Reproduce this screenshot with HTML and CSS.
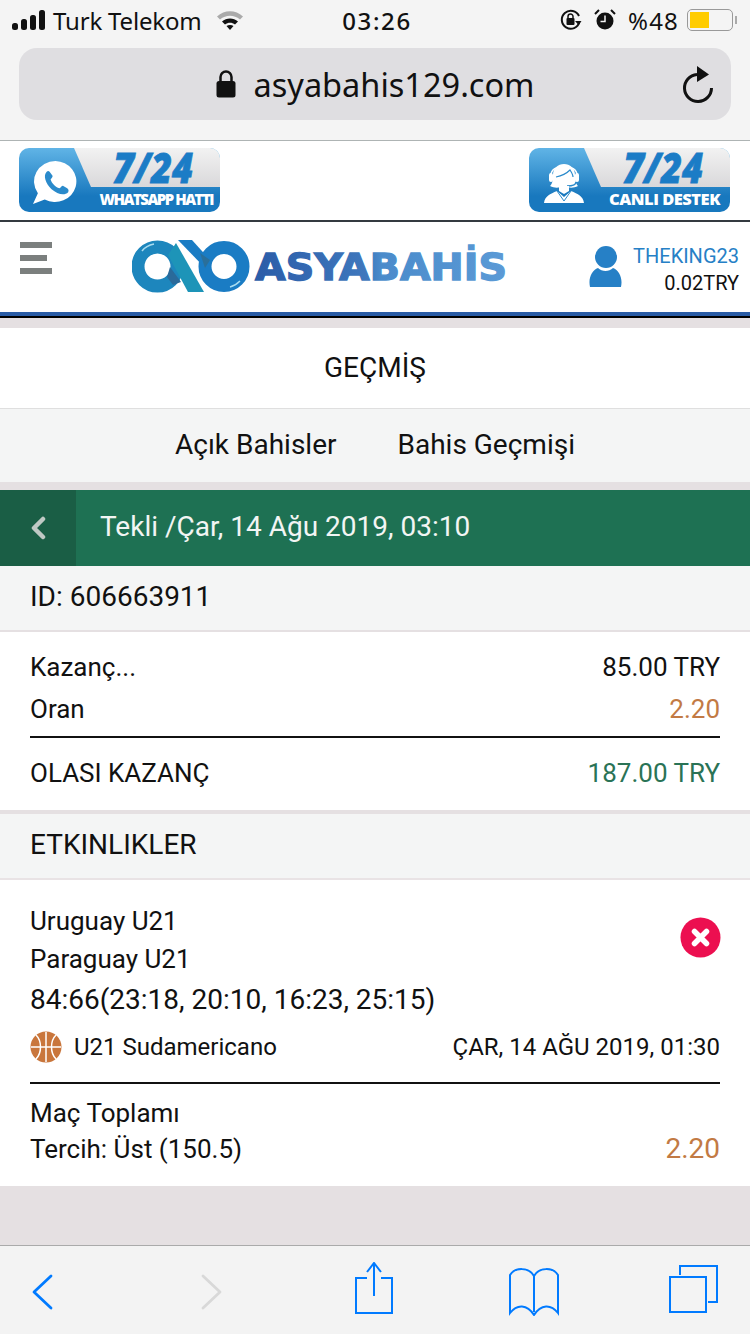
FILE: index.html
```html
<!DOCTYPE html>
<html lang="tr">
<head>
    <meta charset="UTF-8">
    <meta name="viewport" content="width=device-width, initial-scale=1.0">
    <title>Asyabahis - Geçmiş</title>
    <link rel="stylesheet" href="styles.css">
</head>
<body>
    <div class="phone">
        <div class="browser-top">
            <div class="status-bar">
                <div class="status-left">
                    <svg class="signal" width="36" height="20" viewBox="0 0 36 20">
                        <rect x="0" y="13" width="6" height="7" rx="2.5" fill="#111"/>
                        <rect x="9" y="9" width="6" height="11" rx="2.5" fill="#111"/>
                        <rect x="18" y="5" width="6" height="15" rx="2.5" fill="#111"/>
                        <rect x="27" y="0" width="6" height="20" rx="2.5" fill="#111"/>
                    </svg>
                    <span class="carrier">Turk Telekom</span>
                    <svg class="wifi" width="28" height="20" viewBox="0 0 28 20">
                        <path d="M1 6.500C8.500 -.500 19.500 -.500 27 6.500L24 9.500C18 4.500 10 4.500 4 9.500Z" fill="#aaa"/>
                        <path d="M6 11.500C10.500 7.500 17.500 7.500 22 11.500L19 14.500C16 12 12 12 9 14.500Z" fill="#111"/>
                        <path d="M10.500 16C12.500 14.500 15.500 14.500 17.500 16L14 20Z" fill="#111"/>
                    </svg>
                </div>
                <div class="clock">03:26</div>
                <div class="status-right">
                    <svg width="22" height="24" viewBox="0 0 22 24">
                        <path d="M19.500 14A9 9 0 1 1 19 8" fill="none" stroke="#111" stroke-width="2"/>
                        <path d="M15 13L21.500 13L18.500 17Z" fill="#111"/>
                        <rect x="6.500" y="10" width="8" height="7" rx="1" fill="#111"/>
                        <path d="M8 10V8.500a2.500 2.500 0 0 1 5 0V10" fill="none" stroke="#111" stroke-width="1.500"/>
                    </svg>
                    <svg class="alarm" width="22" height="24" viewBox="0 0 22 24">
                        <circle cx="11" cy="13" r="8.500" fill="#111"/>
                        <path d="M11 7.500V13.500H6.500" fill="none" stroke="#f4f4f4" stroke-width="1.500"/>
                        <path d="M1 6L5 2M21 6L17 2" stroke="#111" stroke-width="2"/>
                    </svg>
                    <span class="battery-text">%48</span>
                    <div class="battery"><div class="battery-fill"></div></div>
                    <div class="battery-cap"></div>
                </div>
            </div>
            <div class="url-bar">
                <div class="url">
                    <svg class="lock" width="20" height="28" viewBox="0 0 20 28">
                        <path d="M4.500 13V7a5.500 5.500 0 0 1 11 0V13" fill="none" stroke="#111" stroke-width="2.500"/>
                        <rect x="0.500" y="11" width="19" height="16.500" rx="2.500" fill="#111"/>
                    </svg>
                    <span>asyabahis129.com</span>
                </div>
                <svg class="reload" width="32" height="38" viewBox="0 0 32 38">
                    <path d="M15 8.500A13.500 13.500 0 1 0 29.500 22" fill="none" stroke="#111" stroke-width="3"/>
                    <path d="M15 0L27 8.500L15 16Z" fill="#111"/>
                </svg>
            </div>
        </div>

        <div class="promo-row">
            <div class="promo">
                <div class="promo-icon">
                    <svg width="45" height="43" viewBox="0 0 46 44">
                        <path d="M24 0A22 21 0 1 1 13 39.500L1 44L6 33A22 21 0 0 1 24 0Z" fill="#fff"/>
                        <path d="M15 11C11 15 14 23 20 29C26 34 33 36 37 32C38 30 37 29 36 28L32 25.500C30.500 25 29.500 27.500 28 28C24 27 20 22.500 19 19C19.500 17.500 21.500 16.500 21 15L18 11C17 10 16 10 15 11Z" fill="#2a8acb"/>
                    </svg>
                </div>
                <div class="promo-label">
                    <svg class="promo-big" width="146" height="39" viewBox="0 0 146 39">
                        <text x="39" y="35" textLength="80" lengthAdjust="spacingAndGlyphs">7/24</text>
                    </svg>
                    <div class="promo-small">WHATSAPP HATTI</div>
                </div>
            </div>
            <div class="promo">
                <div class="promo-icon">
                    <svg class="agent" width="42" height="44" viewBox="0 0 42 44">
                        <path d="M8 17C7 4 35 4 34 17" fill="none" stroke="#fff" stroke-width="1.500"/>
                        <path d="M10 16C10 9 15 5 21 5C27 5 32 9 32 16C32 22 33 25 35 27C31 29 27 29 25 28H17C15 29 11 29 7 27C9 25 10 22 10 16Z" fill="#fff"/>
                        <path d="M13 18C18 17 24 14 27 11C29 14 30 16 30 18" fill="none" stroke="#2a8acb" stroke-width="1.200"/>
                        <rect x="6" y="14" width="4" height="9" rx="2" fill="#fff"/>
                        <rect x="32" y="14" width="4" height="9" rx="2" fill="#fff"/>
                        <path d="M33 23C33 26 29 27 24 27" fill="none" stroke="#2a8acb" stroke-width="1.500"/>
                        <path d="M16 27V32L21 35L26 32V27" fill="#fff"/>
                        <path d="M1 44C2 37 7 35 14 32L21 38L28 32C35 35 40 37 41 44Z" fill="#fff"/>
                        <path d="M14 32L21 42L28 32" fill="none" stroke="#2a8acb" stroke-width="1"/>
                    </svg>
                </div>
                <div class="promo-label">
                    <svg class="promo-big" width="146" height="39" viewBox="0 0 146 39">
                        <text x="39" y="35" textLength="80" lengthAdjust="spacingAndGlyphs">7/24</text>
                    </svg>
                    <div class="promo-small wide">CANLI DESTEK</div>
                </div>
            </div>
        </div>

        <header class="site-header">
            <div class="hamburger">
                <div class="ham-line"></div>
                <div class="ham-line short"></div>
                <div class="ham-line"></div>
            </div>
            <svg class="logo" width="376" height="53" viewBox="0 0 376 53">
                <defs>
                    <linearGradient id="logoBlue" gradientUnits="userSpaceOnUse" x1="123" y1="0" x2="375" y2="0">
                        <stop offset="0" stop-color="#2a5ca8"/>
                        <stop offset=".45" stop-color="#3f78bd"/>
                        <stop offset=".5" stop-color="#4a8bcb"/>
                        <stop offset="1" stop-color="#5b9ad6"/>
                    </linearGradient>
                </defs>
                <circle cx="25.500" cy="26.500" r="19.500" fill="none" stroke="#1d86bd" stroke-width="13"/>
                <circle cx="92" cy="26.500" r="19" fill="none" stroke="#1a7cc4" stroke-width="13"/>
                <path d="M46 0H60L79 21L74 29Z" fill="#1a7cc4"/>
                <path d="M36 15L44 3L72 52H56Z" fill="#1d94b8"/>
                <path d="M38 27L49 42L41 45L35 37Z" fill="#2a6a9a"/>
                <path d="M68 13L78 20L73 28Z" fill="#2a6f9a"/>
                <path d="M10 11C13 7 17 5 22 4" fill="none" stroke="#a9dcf0" stroke-width="1.500"/>
                <path d="M98 47C102 46 105 44 108 41" fill="none" stroke="#a9dcf0" stroke-width="1.500"/>
                <text class="logo-text" x="123" y="40" textLength="252" lengthAdjust="spacingAndGlyphs" fill="url(#logoBlue)" stroke="url(#logoBlue)">ASYABAHİS</text>
            </svg>
            <div class="account">
                <svg class="user-icon" width="33" height="41" viewBox="0 0 33 41">
                    <circle cx="17" cy="11" r="11" fill="#2680c6"/>
                    <path d="M1 41C-1 32 3 24 9 22C13 26 20 26 24 22C30 24 34 32 32 41Z" fill="#2680c6"/>
                </svg>
                <div class="account-text">
                    <div class="username">THEKING23</div>
                    <div class="balance">0.02TRY</div>
                </div>
            </div>
        </header>
        <div class="header-edge"></div>

        <div class="page-title">GEÇMİŞ</div>
        <nav class="tabs">
            <span>Açık Bahisler</span>
            <span>Bahis Geçmişi</span>
        </nav>

        <div class="bet-head">
            <div class="back">
                <svg width="16" height="24" viewBox="0 0 16 24">
                    <path d="M13 3L4 12L13 21" fill="none" stroke="#bfc9c4" stroke-width="4.500" stroke-linecap="round" stroke-linejoin="round"/>
                </svg>
            </div>
            <div class="bet-head-title">Tekli /Çar, 14 Ağu 2019, 03:10</div>
        </div>

        <div class="section-bar id-bar">ID: 606663911</div>

        <div class="summary">
            <div class="row">
                <span>Kazanç...</span>
                <span>85.00 TRY</span>
            </div>
            <div class="row rule">
                <span>Oran</span>
                <span class="odd">2.20</span>
            </div>
            <div class="row total">
                <span>OLASI KAZANÇ</span>
                <span class="win">187.00 TRY</span>
            </div>
        </div>

        <div class="section-bar events-bar">ETKINLIKLER</div>

        <div class="event">
            <div class="event-top">
                <div class="teams">
                    <div>Uruguay U21</div>
                    <div>Paraguay U21</div>
                    <div class="score">84:66(23:18, 20:10, 16:23, 25:15)</div>
                </div>
                <svg class="lost" width="41" height="41" viewBox="0 0 41 41">
                    <circle cx="20.500" cy="20.500" r="20" fill="#ec0f50"/>
                    <path d="M14.500 14.500L26.500 26.500M26.500 14.500L14.500 26.500" stroke="#fff" stroke-width="5.500" stroke-linecap="round"/>
                </svg>
            </div>
            <div class="event-league">
                <div class="league-name">
                    <svg width="32" height="32" viewBox="0 0 32 32">
                        <circle cx="16" cy="16" r="15.500" fill="#c9763c"/>
                        <path d="M16 1V31M1 16H31M6 4C12 10 12 22 6 28M26 4C20 10 20 22 26 28" fill="none" stroke="#fff" stroke-width="1.500"/>
                    </svg>
                    <span>U21 Sudamericano</span>
                </div>
                <span class="event-date">ÇAR, 14 AĞU 2019, 01:30</span>
            </div>
            <div class="event-bet">
                <div>
                    <div>Maç Toplamı</div>
                    <div>Tercih: Üst (150.5)</div>
                </div>
                <span class="odd big">2.20</span>
            </div>
        </div>

        <div class="filler"></div>

        <footer class="browser-bottom">
            <svg class="tool-back" width="26" height="38" viewBox="0 0 26 38">
                <path d="M21 3L4 19L21 35" fill="none" stroke="#007aff" stroke-width="2.800" stroke-linecap="round" stroke-linejoin="round"/>
            </svg>
            <svg class="tool-forward" width="26" height="38" viewBox="0 0 26 38">
                <path d="M5 3L22 19L5 35" fill="none" stroke="#d8d8d8" stroke-width="2.800" stroke-linecap="round" stroke-linejoin="round"/>
            </svg>
            <svg class="tool-share" width="38" height="52" viewBox="0 0 38 52">
                <path d="M12 16H1V51H37V16H26" fill="none" stroke="#007aff" stroke-width="2"/>
                <path d="M19 2V34M12 10L19 1L26 10" fill="none" stroke="#007aff" stroke-width="2"/>
            </svg>
            <svg class="tool-book" width="50" height="48" viewBox="0 0 50 48">
                <path d="M25 8C20 -1 6 -1 1 7V45C8 36 18 36 25 47C32 36 42 36 49 45V7C44 -1 30 -1 25 8V44" fill="none" stroke="#007aff" stroke-width="2"/>
            </svg>
            <svg class="tool-tabs" width="50" height="48" viewBox="0 0 50 48">
                <path d="M11 10V1H48V37H39" fill="none" stroke="#007aff" stroke-width="2"/>
                <rect x="1" y="12" width="36" height="35" fill="none" stroke="#007aff" stroke-width="2"/>
            </svg>
        </footer>
    </div>
</body>
</html>
```

FILE: styles.css
```css
* {
    box-sizing: border-box;
}
body {
    margin: 0;
    font-family: Roboto, "Liberation Sans", sans-serif;
    background-color: #e5e0e2;
    color: #111;
}
.phone {
    width: 750px;
    height: 1334px;
    display: flex;
    flex-direction: column;
    overflow: hidden;
}
.browser-top {
    height: 141px;
    background-color: #f4f4f4;
    border-bottom: 1px solid #aeb4b4;
    padding: 0 19px;
}
.status-bar {
    height: 48px;
    display: flex;
    align-items: center;
    justify-content: space-between;
    margin: 0 -6px 0 -7px;
    padding-bottom: 8px;
    position: relative;
}
.status-left,
.status-right {
    display: flex;
    align-items: center;
}
.carrier {
    font-family: "Noto Sans", sans-serif;
    font-size: 24px;
    letter-spacing: -.17px;
    margin-left: 5px;
}
.wifi {
    margin-left: 14px;
}
.clock {
    font-family: "Noto Sans", sans-serif;
    font-size: 24px;
    font-weight: 500;
    letter-spacing: 1.600px;
    position: absolute;
    left: 5px;
    right: 0;
    text-align: center;
    pointer-events: none;
}
.alarm {
    margin-left: 12px;
}
.battery-text {
    font-family: "Noto Sans", sans-serif;
    font-size: 24px;
    letter-spacing: 1.2px;
    margin-left: 12px;
}
.battery {
    width: 46px;
    height: 22px;
    margin-left: 8px;
    border: 1.500px solid #999;
    border-radius: 5px;
    padding: 2px;
}
.battery-fill {
    width: 19px;
    height: 100%;
    background-color: #ffcc00;
}
.battery-cap {
    width: 2px;
    height: 8px;
    margin-left: 2px;
    background-color: #aaa;
}
.url-bar {
    height: 72px;
    background-color: #dfdee1;
    border-radius: 18px;
    display: flex;
    align-items: center;
    justify-content: center;
    position: relative;
}
.url {
    display: flex;
    align-items: center;
    gap: 18px;
    font-family: "Noto Sans", sans-serif;
    font-size: 32.500px;
}
.reload {
    position: absolute;
    right: 17px;
    top: 18px;
}
.promo-row {
    height: 81px;
    background-color: #fff;
    border-bottom: 2px solid #343a40;
    display: flex;
    justify-content: space-between;
    padding: 7px 20px 0 19px;
}
.promo {
    width: 201px;
    height: 64px;
    border-radius: 10px;
    display: flex;
    background: linear-gradient(#60b4e6, #1878be 75%);
}
.promo-icon {
    width: 55px;
    flex-shrink: 0;
    padding: 13px 0 0 13px;
}
.agent {
    margin: -2px 0 0 1px;
}
.promo-label {
    flex: 1;
    display: flex;
    flex-direction: column;
    position: relative;
}
.promo-label::before {
    content: "";
    position: absolute;
    left: 0;
    right: 0;
    top: 0;
    height: 39px;
    border-top-right-radius: 10px;
    background: linear-gradient(#f2f2f2, #d9d8da);
    clip-path: polygon(0 0, 100% 0, 100% 100%, 17px 100%);
}
.promo-big {
    position: relative;
    display: block;
    flex-shrink: 0;
    overflow: visible;
    font-family: "Open Sans", sans-serif;
    font-weight: 800;
    font-style: italic;
    font-size: 42px;
    fill: #1b7cc6;
    stroke: #1b7cc6;
    stroke-width: .8px;
}
.promo-small {
    flex: 1;
    font-family: "Open Sans", sans-serif;
    font-weight: 800;
    font-size: 15px;
    letter-spacing: -1.500px;
    line-height: 24px;
    color: #fff;
    white-space: nowrap;
    text-align: right;
    padding-right: 7px;
}
.promo-small.wide {
    font-size: 16.500px;
    letter-spacing: -.5px;
    padding-right: 10px;
}
.site-header {
    height: 94px;
    background-color: #fff;
    border-bottom: 4px solid #2a5ca6;
    display: flex;
    align-items: flex-start;
    padding: 20px 11px 0 20px;
}
.header-edge {
    height: 2px;
    background-color: #000;
}
.hamburger {
    width: 32px;
    display: flex;
    flex-direction: column;
    gap: 7px;
}
.ham-line {
    height: 6px;
    background-color: #7b7f7e;
}
.ham-line.short {
    width: 27px;
}
.logo {
    flex-shrink: 0;
    margin-left: 80px;
    margin-top: -2px;
}
.logo-text {
    font-family: "DejaVu Sans", sans-serif;
    font-weight: 700;
    font-size: 37px;
    stroke-width: 1.300px;
}
.account {
    margin-left: auto;
    display: flex;
    gap: 11px;
    padding-top: 4px;
}
.account-text {
    text-align: right;
    font-size: 20px;
    line-height: 27px;
    margin-top: -3px;
}
.username {
    color: #2680c6;
}
.page-title {
    height: 81px;
    margin-top: 10px;
    padding-bottom: 2px;
    background-color: #fff;
    border-bottom: 1px solid #dfdfdf;
    display: flex;
    align-items: center;
    justify-content: center;
    font-size: 28px;
}
.tabs {
    height: 73px;
    padding-bottom: 2px;
    background-color: #f4f5f5;
    display: flex;
    align-items: center;
    justify-content: center;
    gap: 61px;
    font-size: 28px;
}
.bet-head {
    height: 76px;
    margin-top: 8px;
    background-color: #1e7153;
    display: flex;
    align-items: center;
    color: #f2f5f3;
    font-size: 28px;
}
.back {
    width: 76px;
    height: 100%;
    background-color: #1a5e45;
    display: flex;
    align-items: center;
    padding-left: 30px;
}
.bet-head-title {
    padding: 0 0 3px 24px;
}
.section-bar {
    background-color: #f4f5f5;
    display: flex;
    align-items: center;
    padding: 0 30px;
    font-size: 28px;
}
.id-bar {
    height: 66px;
    border-bottom: 2px solid #e5e0e2;
    padding-bottom: 4px;
}
.summary {
    background-color: #fff;
    padding: 14px 30px 0;
    height: 178px;
    font-size: 26px;
}
.row {
    display: flex;
    justify-content: space-between;
    align-items: center;
    height: 42px;
}
.row.rule {
    height: 50px;
    padding-bottom: 6px;
    border-bottom: 2px solid #111;
}
.row.total {
    height: 70px;
}
.odd {
    color: #c27a44;
}
.win {
    color: #2a7356;
}
.events-bar {
    height: 70px;
    border-top: 4px solid #e5e0e2;
    border-bottom: 2px solid #e9e3e5;
    padding-bottom: 4px;
}
.event {
    background-color: #fff;
    height: 306px;
    padding: 22px 30px 0;
    font-size: 26px;
}
.event-top {
    display: flex;
    justify-content: space-between;
    align-items: flex-start;
}
.teams {
    line-height: 38px;
}
.score {
    margin-top: 3px;
    font-size: 28px;
}
.lost {
    margin: 15px -1px 0 0;
}
.event-league {
    display: flex;
    justify-content: space-between;
    align-items: center;
    height: 54px;
    padding-bottom: 18px;
    margin-top: 11px;
    border-bottom: 2px solid #111;
    font-size: 24px;
}
.league-name {
    display: flex;
    align-items: center;
    gap: 12px;
}
.event-bet {
    display: flex;
    justify-content: space-between;
    align-items: flex-end;
    margin-top: 11px;
    line-height: 36px;
}
.odd.big {
    font-size: 28px;
}
.filler {
    flex: 1;
}
.browser-bottom {
    height: 89px;
    background-color: #f3f3f3;
    border-top: 1px solid #aaa;
    display: flex;
    align-items: flex-start;
    padding-left: 30px;
}
.tool-back {
    margin-top: 27px;
}
.tool-forward {
    margin: 27px 0 0 142px;
}
.tool-share {
    margin: 16px 0 0 131px;
}
.tool-book {
    margin: 22px 0 0 116px;
}
.tool-tabs {
    margin: 19px 0 0 110px;
}
```
